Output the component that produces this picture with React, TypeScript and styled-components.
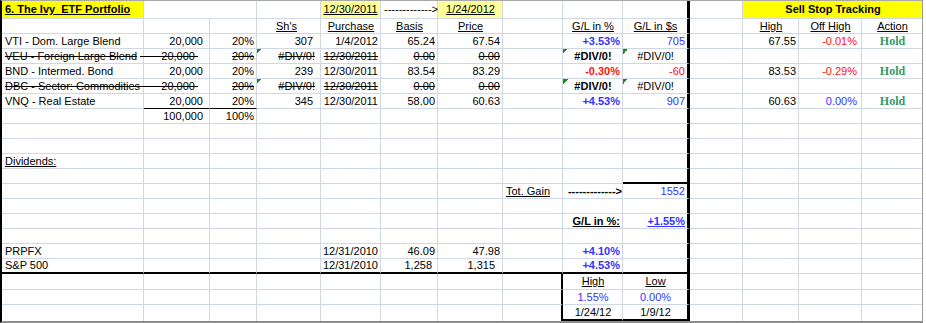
import React from 'react';
import styled, { createGlobalStyle } from 'styled-components';

type Align = 'left' | 'right' | 'center';
type Edge = 'grid' | 'none' | 'thin' | 'thick' | 'heavy';

type Spec = {
  t: string;
  a?: Align;
  pr?: number;
  color?: string;
  bold?: boolean;
  u?: boolean;
  s?: boolean;
  bg?: string;
  flag?: boolean;
  serif?: boolean;
  span?: number;
};

const GRID = '#d0d7e5';
const BLUE = '#3333ff';
const RED = '#ff1010';
const GREEN = '#339966';
const YELLOW = '#ffff00';
const PALE = '#ffff99';

const edges: Record<Edge, string> = {
  grid: `1px solid ${GRID}`,
  none: '0',
  thin: '1px solid #000',
  thick: '2px solid #000',
  heavy: '3px solid #000',
};

const GlobalStyle = createGlobalStyle`
  body {
    margin: 0;
    background: #fff;
  }
`;

const Page = styled.div`
  width: 926px;
  height: 323px;
  overflow: hidden;
  background: #fff;
`;

const Sheet = styled.div`
  display: grid;
  grid-template-columns: 142px 66px 47px 64px 60px 57px 65px 60px 60px 67px 53px 56px 63px 60px;
  grid-template-rows: 18px repeat(17, 15px) 16px 15px 16px;
  width: max-content;
  border-top: 1px solid #a8a8a8;
  border-left: 2px solid #000;
  border-right: 1px solid #9c9c9c;
  border-bottom: 2px solid #8e8e8e;
  font-family: 'Liberation Sans', Arial, sans-serif;
  font-size: 11px;
  color: #000;
`;

const Cell = styled.div<{
  $align: Align;
  $pr: number;
  $right: Edge;
  $bottom: Edge;
  $span: number;
  $color?: string;
  $bold?: boolean;
  $u?: boolean;
  $s?: boolean;
  $bg?: string;
  $flag?: boolean;
  $serif?: boolean;
}>`
  display: flex;
  align-items: center;
  justify-content: ${(p) => (p.$align === 'right' ? 'flex-end' : p.$align === 'center' ? 'center' : 'flex-start')};
  grid-column: span ${(p) => p.$span};
  box-sizing: border-box;
  min-width: 0;
  padding: 0 ${(p) => p.$pr}px 0 3px;
  white-space: pre;
  line-height: 1;
  border-right: ${(p) => edges[p.$right]};
  border-bottom: ${(p) => edges[p.$bottom]};
  background-color: ${(p) => p.$bg ?? 'transparent'};
  background-image: ${(p) => (p.$flag ? 'linear-gradient(135deg, #1f8a1f 0 50%, transparent 50%)' : 'none')};
  background-size: 5px 5px;
  background-repeat: no-repeat;
  color: ${(p) => p.$color ?? '#000'};
  font-weight: ${(p) => (p.$bold ? 700 : 400)};
  font-family: ${(p) => (p.$serif ? "'Liberation Serif', 'Times New Roman', serif" : 'inherit')};
  font-size: ${(p) => (p.$serif ? '12px' : 'inherit')};
  text-decoration: ${(p) => (p.$u ? 'underline' : p.$s ? 'line-through' : 'none')};
  text-underline-offset: 1px;
`;

const COLS = 'ABCDEFGHIJKLMN'.split('');
const PAD: Record<string, number> = { B: 6, D: 7 };
const NB = '\u00a0';

const hold: Spec = { t: 'Hold', a: 'center', bold: true, serif: true, color: GREEN };
const arrow = '------------->';

const struck = (name: string): Record<string, Spec> => ({
  A: { t: name, s: true },
  B: { t: `${NB.repeat(7)}20,000${NB}`, a: 'right', pr: 11, s: true },
  C: { t: '20%', a: 'right', s: true },
  D: { t: '#DIV/0!', a: 'right', pr: 5, s: true, flag: true },
  E: { t: '12/30/2011', a: 'right', s: true },
  F: { t: '0.00', a: 'right', s: true },
  G: { t: '0.00', a: 'right', s: true },
  I: { t: '#DIV/0!', a: 'center', bold: true, flag: true },
  J: { t: '#DIV/0!', a: 'center', flag: true },
});

const held = (
  name: string,
  sh: string,
  date: string,
  basis: string,
  price: string,
  pct: string,
  gain: string,
  high: string,
  off: string,
  tone: string,
  offTone: string,
): Record<string, Spec> => ({
  A: { t: name },
  B: { t: '20,000', a: 'right' },
  C: { t: '20%', a: 'right' },
  D: { t: sh, a: 'right' },
  E: { t: date, a: 'right' },
  F: { t: basis, a: 'right' },
  G: { t: price, a: 'right' },
  I: { t: pct, a: 'right', bold: true, color: tone },
  J: { t: gain, a: 'right', color: tone },
  L: { t: high, a: 'right' },
  M: { t: off, a: 'right', pr: 4, color: offTone },
  N: hold,
});

const rows: Record<string, Spec>[] = [
  {
    A: { t: '6. The Ivy  ETF Portfolio', bold: true, u: true, bg: YELLOW },
    E: { t: '12/30/2011', a: 'center', u: true, bg: PALE, pr: 3 },
    F: { t: arrow, pr: 0 },
    G: { t: '1/24/2012', a: 'center', u: true, bg: PALE },
    L: { t: 'Sell Stop Tracking', a: 'center', bold: true, bg: YELLOW, span: 3 },
  },
  {
    D: { t: "Sh's", a: 'center', u: true },
    E: { t: 'Purchase', a: 'center', u: true },
    F: { t: 'Basis', a: 'center', u: true },
    G: { t: 'Price', a: 'center', u: true },
    I: { t: 'G/L in %', a: 'center', u: true },
    J: { t: 'G/L in $s', a: 'center', u: true },
    L: { t: 'High', a: 'center', u: true },
    M: { t: 'Off High', a: 'center', u: true },
    N: { t: 'Action', a: 'center', u: true },
  },
  held('VTI - Dom. Large Blend', '307', '1/4/2012', '65.24', '67.54', '+3.53%', '705', '67.55', '-0.01%', BLUE, RED),
  struck('VEU - Foreign Large Blend'),
  held('BND - Intermed. Bond', '239', '12/30/2011', '83.54', '83.29', '-0.30%', '-60', '83.53', '-0.29%', RED, RED),
  struck('DBC - Sector: Commodities'),
  held('VNQ - Real Estate', '345', '12/30/2011', '58.00', '60.63', '+4.53%', '907', '60.63', '0.00%', BLUE, BLUE),
  {
    B: { t: '100,000', a: 'right' },
    C: { t: '100%', a: 'right' },
  },
  {},
  {},
  { A: { t: 'Dividends:', u: true } },
  {},
  {
    H: { t: 'Tot. Gain', u: true },
    I: { t: arrow, a: 'right', pr: 0, bold: true },
    J: { t: '1552', a: 'right', color: BLUE },
  },
  {},
  {
    I: { t: 'G/L in %:', a: 'right', bold: true, u: true },
    J: { t: '+1.55%', a: 'right', bold: true, u: true, color: BLUE },
  },
  {},
  {
    A: { t: 'PRPFX' },
    E: { t: '12/31/2010', a: 'right' },
    F: { t: '46.09', a: 'right' },
    G: { t: '47.98', a: 'right' },
    I: { t: '+4.10%', a: 'right', bold: true, color: BLUE },
  },
  {
    A: { t: 'S&P 500' },
    E: { t: '12/31/2010', a: 'right' },
    F: { t: '1,258', a: 'right', pr: 5 },
    G: { t: '1,315', a: 'right', pr: 7 },
    I: { t: '+4.53%', a: 'right', bold: true, color: BLUE },
  },
  {
    I: { t: 'High', a: 'center', u: true },
    J: { t: 'Low', a: 'center', u: true },
  },
  {
    I: { t: '1.55%', a: 'center', color: BLUE },
    J: { t: '0.00%', a: 'center', color: BLUE },
  },
  {
    I: { t: '1/24/12', a: 'center' },
    J: { t: '1/9/12', a: 'center' },
  },
];

const rightEdge = (r: number, c: number, span?: number): Edge => {
  if (c === 9) return 'heavy';
  if (c === 7 && r >= 18) return 'thick';
  if (c === 13 || span) return 'none';
  if (r === 0 && c === 1) return 'none';
  return 'grid';
};

const bottomEdge = (r: number, c: number): Edge => {
  if (r === 17 && c <= 9) return 'thick';
  if (r === 20) return c === 8 || c === 9 ? 'thick' : 'none';
  if (r === 6 && (c === 1 || c === 2)) return 'thin';
  if (r === 11 && c === 9) return 'thick';
  return 'grid';
};

function App() {
  return (
    <Page>
      <GlobalStyle />
      <Sheet>
        {rows.map((row, r) => {
          let skip = 0;
          return COLS.map((col, c) => {
            if (skip > 0) {
              skip -= 1;
              return null;
            }
            const spec = row[col];
            if (spec?.span) skip = spec.span - 1;
            return (
              <Cell
                key={`${r}-${col}`}
                $align={spec?.a ?? 'left'}
                $pr={spec?.pr ?? PAD[col] ?? 2}
                $span={spec?.span ?? 1}
                $right={rightEdge(r, c, spec?.span)}
                $bottom={bottomEdge(r, c)}
                $color={spec?.color}
                $bold={spec?.bold}
                $u={spec?.u}
                $s={spec?.s}
                $bg={spec?.bg}
                $flag={spec?.flag}
                $serif={spec?.serif}
              >
                {spec?.t}
              </Cell>
            );
          });
        })}
      </Sheet>
    </Page>
  );
}

export default App;
